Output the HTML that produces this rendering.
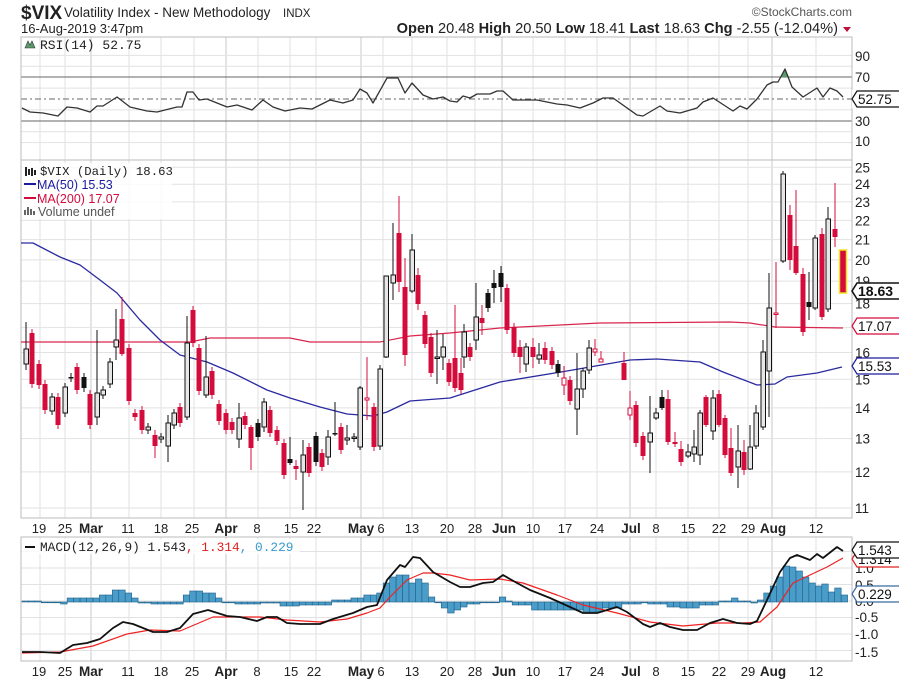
<!DOCTYPE html>
<html><head><meta charset="utf-8"><style>
html,body{margin:0;padding:0;background:#fff;}
svg{display:block;font-family:"Liberation Sans",sans-serif;}
</style></head><body>
<svg id="s" width="899" height="681" viewBox="0 0 899 681" xmlns="http://www.w3.org/2000/svg">
<text x="21" y="19" font-size="19" font-weight="bold" fill="#222">$VIX</text>
<text x="64" y="17" font-size="13.5" fill="#222">Volatility Index - New Methodology</text>
<text x="283" y="17" font-size="11.5" fill="#222">INDX</text>
<text x="21" y="33" font-size="13" fill="#222">16-Aug-2019 3:47pm</text>
<text x="852" y="16" font-size="12" fill="#555" text-anchor="end">©StockCharts.com</text>
<text x="838" y="33" font-size="14.6" fill="#222" text-anchor="end"><tspan font-weight="bold">Open</tspan> 20.48  <tspan font-weight="bold">High</tspan> 20.50  <tspan font-weight="bold">Low</tspan> 18.41  <tspan font-weight="bold">Last</tspan> 18.63  <tspan font-weight="bold">Chg</tspan> -2.55 (-12.04%)</text>
<path d="M843 27 L851 27 L847 32 Z" fill="#c0103c"/>
<g id="g"></g>
</svg>
<script>
var NS="http://www.w3.org/2000/svg",G=document.getElementById('g');
function el(t,a,txt){var e=document.createElementNS(NS,t);for(var k in a)e.setAttribute(k,a[k]);if(txt!==undefined)e.textContent=txt;G.appendChild(e);return e;}
function line(x1,y1,x2,y2,c,w,d){var a={x1:x1,y1:y1,x2:x2,y2:y2,stroke:c,'stroke-width':w||1};if(d)a['stroke-dasharray']=d;el('line',a);}
function poly(p,c,w){el('polyline',{points:p.map(function(q){return q.join(',')}).join(' '),fill:'none',stroke:c,'stroke-width':w||1,'stroke-linejoin':'round'});}
function txt(x,y,s,o){var a={x:x,y:y,'font-size':o&&o.fs||12,fill:o&&o.c||'#222'};if(o&&o.a)a['text-anchor']=o.a;if(o&&o.b)a['font-weight']='bold';if(o&&o.m)a['font-family']='Liberation Mono, monospace';el('text',a,s);}
var L=21,R=852;
var py=function(p){return 508-415*Math.log(p/11);};
var wk=[40,65,129,161,194,258,290,316,383,412,447,475,533,565,597,656,688,719,748,816];
var mo=[91,226,361,502,630,772];
[[37,160],[160,518],[537,661]].forEach(function(r){
 wk.forEach(function(x){line(x,r[0],x,r[1],'#e2e2e2',1);});
 mo.forEach(function(x){line(x,r[0],x,r[1],'#c8c8c8',1);});
});
[90,80,60,40,20,10].forEach(function(v){var y=99-(v-50)*1.09;line(L,y,R,y,'#e2e2e2',1);});
line(L,77,R,77,'#666',1);line(L,121,R,121,'#666',1);line(L,99,R,99,'#666',1,'6,3,2,3');
for(var p=11;p<=25;p++){var y=py(p);line(L,y,R,y,'#e2e2e2',1);}
[-1.5,-1,-0.5,0,0.5,1,1.5].forEach(function(v){var y=601-33*v;line(L,y,R,y,'#e2e2e2',1);});
[[37,160],[160,518],[537,661]].forEach(function(r){el('rect',{x:L,y:r[0],width:R-L,height:r[1]-r[0],fill:'none',stroke:'#bbb'});});
var rsi=[[22,108],[30,112],[43,113],[58,116],[67,107],[77,108],[90,112],[97,106],[103,106],[117,97],[130,107],[147,111],[157,112],[177,107],[182,107],[187,92],[193,92],[199,100],[207,99],[227,107],[237,105],[252,110],[263,100],[273,107],[285,111],[300,108],[312,109],[330,100],[343,103],[353,100],[360,89],[367,93],[373,103],[387,78],[398,78],[405,93],[412,83],[423,95],[433,99],[443,97],[450,101],[457,102],[463,96],[470,98],[477,94],[490,94],[497,91],[503,91],[513,100],[537,100],[557,104],[567,105],[580,108],[593,103],[603,98],[613,98],[637,115],[643,116],[660,106],[667,111],[680,113],[697,108],[703,102],[713,98],[733,111],[740,106],[747,109],[757,99],[767,85],[773,82],[778,82],[785,69],[792,87],[803,97],[817,88],[823,97],[830,88],[837,91],[843,97]];
el('path',{d:'M781 77 L785 69 L789 77 Z',fill:'#5a9a6a'});
poly(rsi,'#333',1.3);
el('path',{d:'M25 48 L28 41 L30 45 L32 41 L35 48 Z',fill:'#5a9a6a',stroke:'#333','stroke-width':0.6});
txt(40,49,'RSI(14) 52.75',{fs:13,m:1});
var ma50=[[21,243],[33,243],[60,257],[80,265],[100,280],[117,293],[140,320],[160,340],[180,355],[207,362],[233,373],[267,390],[290,398],[320,407],[347,414],[373,416],[387,412],[410,401],[450,398],[500,382],[567,371],[630,360],[657,359],[700,362],[723,372],[757,385],[775,384],[787,377],[817,373],[842,367]];
var ma200=[[21,342],[190,342],[210,338],[290,338],[310,342],[380,342],[410,336],[450,333],[500,328],[600,323],[730,322],[750,323],[775,327],[843,328]];
poly(ma200,'#d9264f',1.2);poly(ma50,'#2a2aa0',1.3);
var C=[[26,349,364,'w',322,370],[32,333,384,'r'],[39,364,385,'r'],[45,384,410,'r'],[52,397,411,'w'],[58,397,425,'r'],[65,387,413,'w'],[71,377,378,'b'],[77,367,390,'r'],[84,377,388,'b'],[90,394,425,'r'],[97,393,417,'w',330,425],[103,390,395,'w'],[110,362,384,'w'],[116,340,347,'w',309,360],[122,319,354,'r',297,356],[129,348,401,'r'],[135,413,417,'r'],[142,410,430,'r'],[148,427,430,'w'],[155,435,446,'r',430,458],[161,437,439,'w'],[168,423,446,'w',415,462],[174,413,425,'w'],[180,407,423,'r'],[187,343,417,'w',316,420],[193,310,343,'r'],[199,348,391,'r'],[206,377,395,'w',336,398],[212,371,395,'r'],[219,404,421,'r'],[226,413,430,'r'],[232,422,430,'r'],[239,418,439,'w',403,448],[245,416,425,'r'],[251,427,448,'r',425,470],[258,423,437,'b'],[264,402,427,'w',398,432],[270,410,433,'r'],[277,430,441,'r'],[284,443,475,'r'],[290,459,463,'b',437,465],[296,466,469,'r',460,480],[303,455,472,'w',440,510],[309,447,473,'r'],[316,436,462,'b'],[322,453,467,'r'],[328,437,457,'w',430,465],[335,433,434,'b',402,436],[341,427,450,'r'],[347,438,440,'w',425,445],[354,437,438,'w'],[360,388,447,'w',386,450],[367,398,400,'o',357,420],[374,407,447,'r'],[380,369,446,'w'],[386,276,357,'w',287,358],[393,275,283,'w',223,300],[399,233,282,'r',196,292],[405,287,355,'r',258,366],[412,250,291,'w',234,293],[418,275,304,'r',268,310],[425,315,344,'r'],[431,337,373,'r'],[437,357,358,'w',330,384],[443,347,357,'w',334,370],[449,363,382,'r'],[455,358,388,'r',305,392],[461,373,390,'r',358,394],[464,332,357,'w',324,368],[470,347,357,'r'],[476,317,340,'w',283,350],[482,318,323,'r',305,335],[488,293,308,'b'],[494,283,288,'b',270,303],[501,273,287,'b',266,302],[507,288,330,'r'],[514,327,353,'r'],[520,347,357,'r',340,373],[526,347,364,'w',343,372],[533,347,357,'r',338,368],[539,355,359,'w',343,364],[545,348,360,'r',342,364],[552,351,365,'r'],[558,364,373,'b'],[564,378,385,'o',366,395],[570,380,401,'r'],[577,389,409,'w',353,435],[583,371,389,'w',368,398],[589,348,370,'w',340,374],[595,349,352,'o',339,356],[601,359,362,'o',351,362],[624,363,380,'r',352,380],[630,408,415,'o',391,420],[636,405,443,'r'],[643,436,456,'r'],[650,433,442,'w',396,473],[656,413,418,'w',408,420],[662,397,408,'b',390,410],[668,399,442,'r',390,445],[675,442,444,'r',432,447],[681,449,462,'r',441,466],[688,452,456,'w',444,458],[694,447,454,'w',430,462],[700,413,455,'w',410,465],[706,397,425,'r',395,427],[713,398,431,'w',390,440],[719,394,425,'r',390,427],[725,418,455,'r',415,458],[731,448,473,'r',428,476],[738,451,467,'w',425,488],[744,452,470,'r',440,475],[750,447,469,'w',425,470],[756,413,446,'w',405,449],[763,352,427,'w',340,430],[769,308,371,'w',273,417],[776,313,314,'o',262,328],[783,174,261,'w',171,263],[790,215,260,'r',205,270],[796,246,273,'r',190,275],[803,274,332,'r',268,336],[809,302,307,'b',272,320],[815,238,308,'w',235,310],[822,234,317,'r',228,320],[828,219,309,'w',207,312],[835,229,237,'r',183,247]];
C.forEach(function(c){
 var x=c[0],t=c[1],b=c[2],ty=c[3],hi=c.length>4?c[4]:t-4,lo=c.length>5?c[5]:b+4;
 var col=(ty=='r'||ty=='o')?'#d40c3c':'#111';
 line(x,hi,x,lo,col,1);
 var h=Math.max(b-t,1.5);
 if(ty=='r')el('rect',{x:x-2.5,y:t,width:5,height:h,fill:'#d40c3c'});
 else if(ty=='b')el('rect',{x:x-2.5,y:t,width:5,height:h,fill:'#111'});
 else if(ty=='o')el('rect',{x:x-2,y:t,width:4,height:h,fill:'#fff',stroke:'#d40c3c'});
 else el('rect',{x:x-2,y:t,width:4.5,height:h,fill:'#e6e6e6',stroke:'#111'});
});
el('rect',{x:839.5,y:250,width:7,height:43,fill:'#d40c3c',stroke:'#f0e020','stroke-width':1.5});
el('rect',{x:22,y:163,width:150,height:56,fill:'#fff',opacity:0.8});
el('path',{d:'M25 167 h2 v9 h-2z M28 169 h2 v6 h-2z M31 168 h2 v8 h-2z M34 170 h2 v5 h-2z',fill:'#222'});
txt(40,175,'$VIX (Daily) 18.63',{fs:12.3,m:1});
line(24,184,36,184,'#1a1aa0',2);txt(37,189,'MA(50) 15.53',{fs:12.5,c:'#1a1aa0'});
line(24,198,36,198,'#d40c3c',2);txt(37,203,'MA(200) 17.07',{fs:12.5,c:'#d40c3c'});
el('path',{d:'M24 215 v-5 h2 v5 M27 215 v-8 h2 v8 M30 215 v-6 h2 v6 M33 215 v-4 h2 v4',fill:'#666',stroke:'none'});
txt(38,216,'Volume undef',{fs:12.5,c:'#555'});
var H=[[40,601],[60,602],[65,604],[100,598],[113,595],[127,590],[133,593],[140,598],[153,603],[180,604],[187,595],[200,591],[213,593],[220,598],[233,602],[260,604],[280,603],[300,606],[333,605],[353,600],[367,598],[375,595],[380,593],[390,583],[397,577],[407,575],[413,583],[420,579],[430,583],[437,597],[443,602],[450,608],[457,613],[463,610],[470,607],[480,604],[500,602],[507,597],[513,601],[530,605],[580,610],[600,612],[620,608],[640,604],[650,602],[665,604],[680,607],[700,608],[717,605],[730,601],[737,598],[750,601],[757,603],[763,600],[770,593],[777,586],[783,577],[790,566],[797,567],[803,571],[810,577],[817,583],[823,586],[830,584],[837,592],[843,588],[850,595]];
var z=602;
for(var x=22;x<847;x+=6.45){var xc=x+3.2,v=602;for(var i=0;i<H.length;i++){if(xc<=H[i][0]){v=H[i][1];break;}}
 var t=Math.min(v,z),h=Math.max(Math.abs(v-z),0.8);
 el('rect',{x:x,y:t,width:6.45,height:h,fill:'#4a9cc9',stroke:'#1f5f88','stroke-width':0.6});}
var mk=[[22,652],[40,652],[60,653],[73,645],[87,643],[100,639],[113,628],[123,622],[133,624],[153,632],[167,632],[180,628],[193,614],[208,610],[227,616],[240,617],[257,621],[267,617],[277,617],[287,623],[300,624],[320,624],[333,619],[353,613],[367,607],[377,605],[387,580],[400,565],[405,567],[413,557],[420,558],[433,572],[450,582],[460,587],[470,587],[483,583],[493,582],[503,575],[517,583],[530,590],[550,598],[570,607],[583,613],[597,613],[617,607],[627,612],[643,624],[650,627],[660,623],[670,627],[683,630],[697,630],[710,623],[723,619],[737,623],[750,624],[757,621],[767,600],[780,572],[790,558],[797,555],[810,560],[817,554],[823,558],[837,547],[843,551]];
var sg=[[22,653],[60,652],[93,646],[127,634],[150,630],[180,631],[213,617],[233,617],[260,617],[287,620],[320,622],[347,619],[367,613],[380,608],[390,597],[407,580],[423,573],[433,573],[450,575],[470,580],[500,579],[523,583],[557,595],[583,605],[617,613],[650,622],[683,626],[717,623],[743,623],[760,622],[777,607],[793,583],[810,575],[827,567],[843,558]];
poly(sg,'#ee2222',1.2);poly(mk,'#111',1.8);
el('rect',{x:22,y:539,width:278,height:15,fill:'#fff',opacity:0.8});
line(25,547,35,547,'#111',2);
el('text',{x:40,y:551,'font-size':12.8,fill:'#222','font-family':'Liberation Mono, monospace'}).innerHTML='MACD(12,26,9) 1.543<tspan fill="#e02020">, 1.314</tspan><tspan fill="#3a9ad0">, 0.229</tspan>';
function rlab(y,s){txt(855,y+5,s,{fs:13.5});}
rlab(56,'90');rlab(77,'70');rlab(121,'30');rlab(141,'10');
[25,24,23,22,21,20,19,18,16,15,14,13,12,11].forEach(function(p){rlab(py(p),String(p));});
[[568,'1.0'],[585,'0.5'],[601,'0.0'],[617,'-0.5'],[634,'-1.0'],[652,'-1.5']].forEach(function(a){rlab(a[0],a[1]);});
function box(y,s,c,b){el('path',{d:'M852 '+y+' l5 -8 h50 v16 h-50 z',fill:'#fff',stroke:c,'stroke-width':b?1.6:1.2});txt(858,y+5,s,{fs:b?14:13.5,b:b,c:'#111'});}
el('rect',{x:852,y:90,width:47,height:18,fill:'#fff'});
box(99,'52.75','#111');
box(559,'1.314','#e02020');box(550,'1.543','#111');box(594,'0.229','#3a6aa0');
box(326,'17.07','#d40c3c');box(366,'15.53','#1a1aa0');box(291,'18.63','#111',true);
var D=[[39,'19'],[65,'25'],[91,'Mar',1],[128,'11'],[161,'18'],[192,'25'],[226,'Apr',1],[257,'8'],[291,'15'],[314,'22'],[361,'May',1],[381,'6'],[412,'13'],[447,'20'],[475,'28'],[504,'Jun',1],[533,'10'],[565,'17'],[597,'24'],[631,'Jul',1],[656,'8'],[688,'15'],[719,'22'],[748,'29'],[773,'Aug',1],[816,'12']];
[533,676].forEach(function(y){D.forEach(function(d){txt(d[0],y,d[1],{fs:d[2]?13.5:13,b:!!d[2],a:'middle'});});});
</script>
</body></html>
